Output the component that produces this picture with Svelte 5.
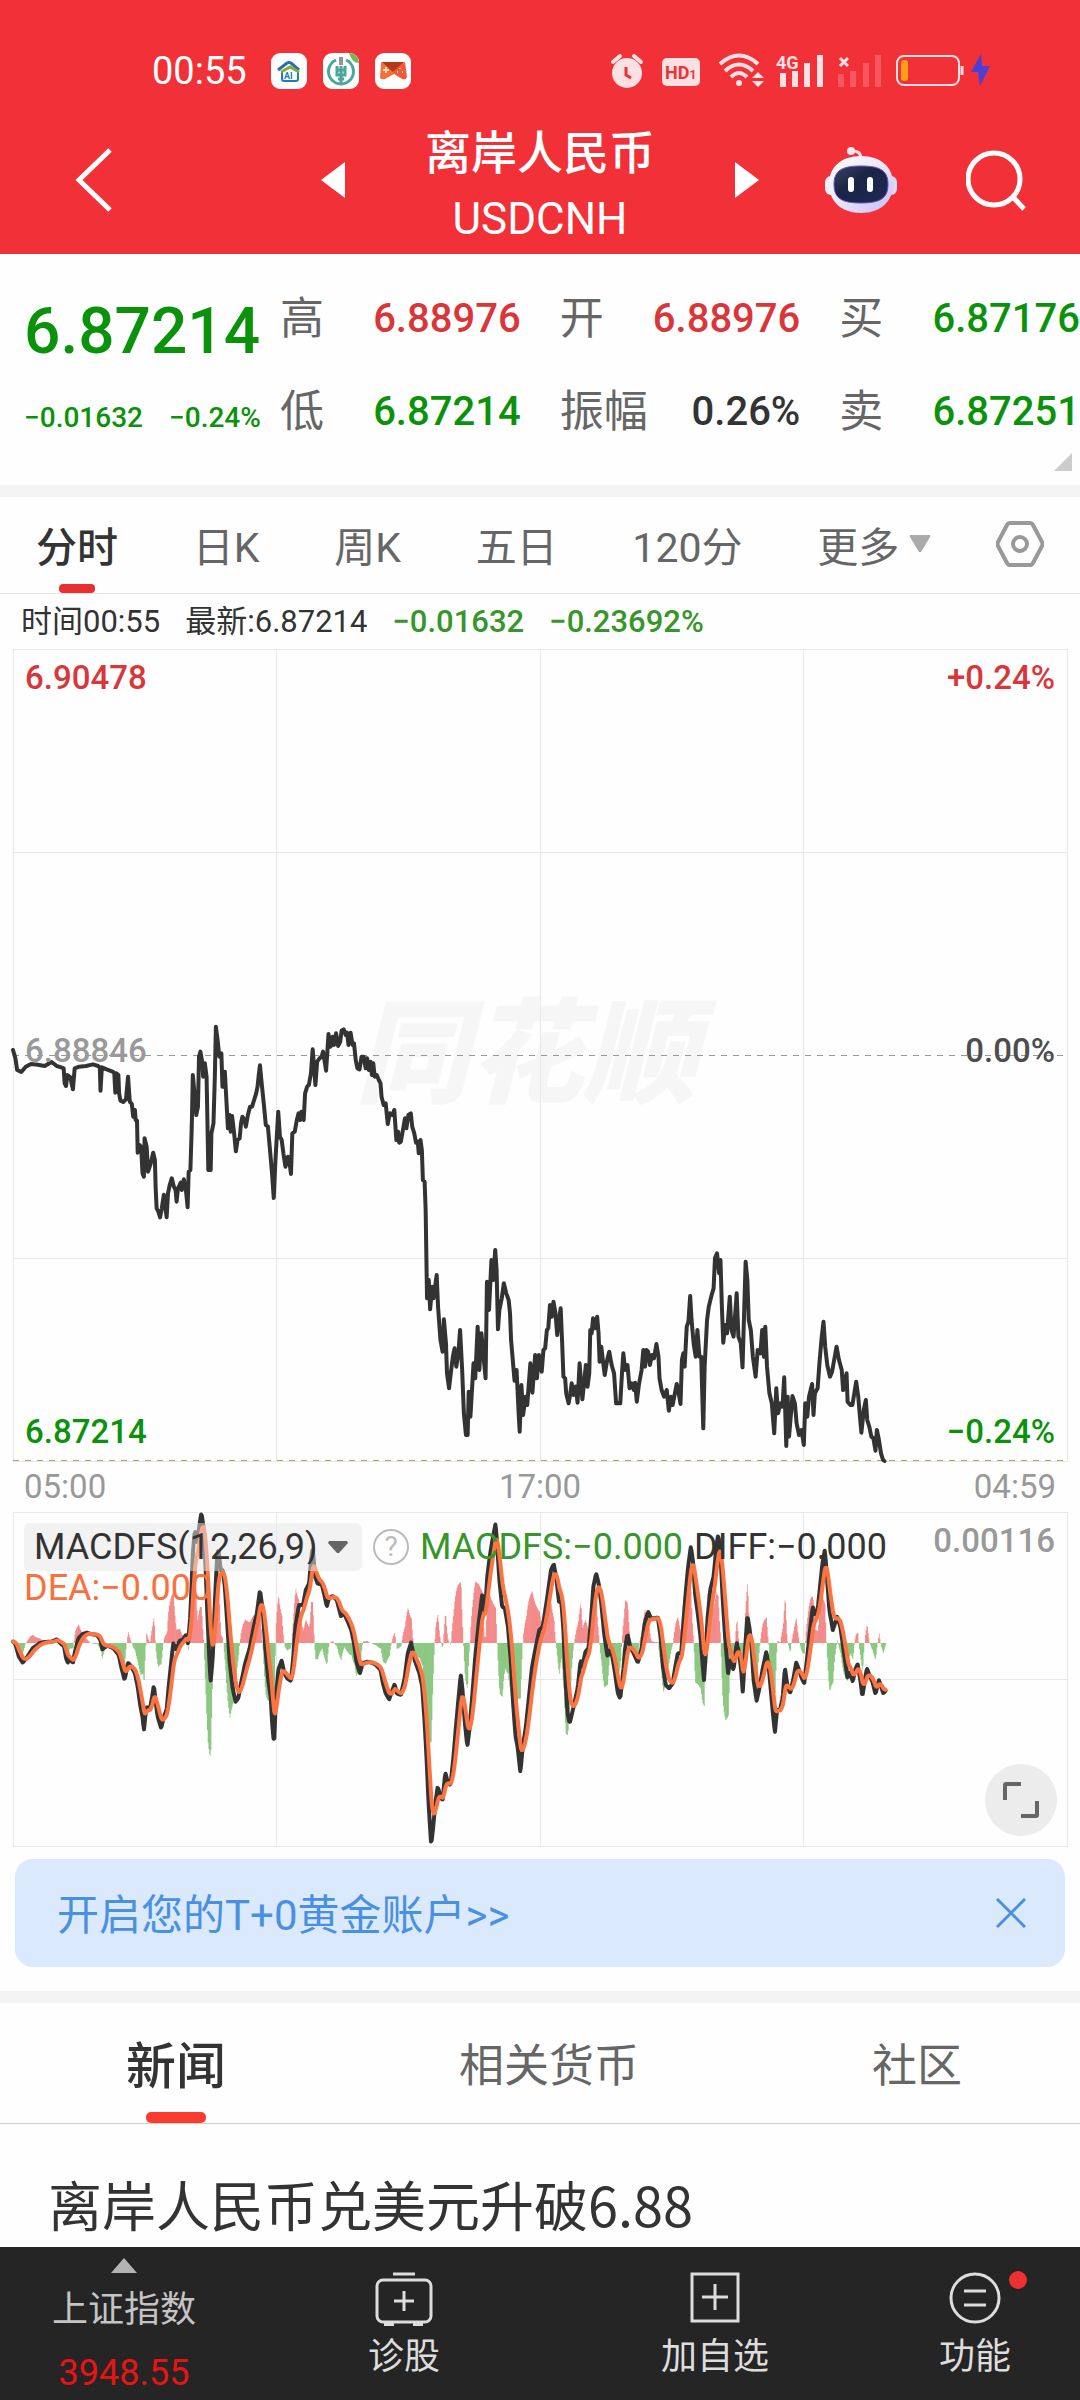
<script>
const quotes = [
    { label: '高', value: '6.88976', tone: 'up' },
    { label: '开', value: '6.88976', tone: 'up' },
    { label: '买', value: '6.87176', tone: 'down' },
    { label: '低', value: '6.87214', tone: 'down' },
    { label: '振幅', value: '0.26%', tone: 'flat' },
    { label: '卖', value: '6.87251', tone: 'down' },
]
const periods = ['分时', '日K', '周K', '五日', '120分']
const sections = ['新闻', '相关货币', '社区']

let period = '分时'
let section = '新闻'
let bannerOpen = true

// the session is drawn on a 3060 unit wide canvas, each list covers one half of it
const HALF = 1530
const WIDTH = 3060
const PRICE_H = 2436
const MACD_H = 1002
const ZERO = 393
const MINUTE = 2.125

const priceFirst = '38,270 45,295 50,330 62,336 75,320 90,312 110,314 130,318 150,306 165,318 178,322 185,325 188,370 192,378 196,345 205,352 208,370 212,388 217,325 230,320 250,318 270,313 285,318 290,322 292,392 296,322 310,328 325,334 332,338 335,398 338,340 344,345 346,400 350,422 358,426 366,418 372,350 377,425 383,432 387,470 392,450 394,480 398,482 400,578 405,555 410,560 414,640 418,650 420,535 426,560 430,635 438,610 445,578 450,600 452,680 455,745 460,755 465,772 470,745 476,704 480,740 484,772 488,700 493,675 499,655 505,680 510,690 513,725 517,685 525,668 528,690 534,658 540,690 545,742 548,635 553,630 557,500 560,345 565,400 570,465 575,440 578,290 582,275 588,310 590,350 595,310 600,350 602,460 605,630 612,630 614,520 620,490 624,350 627,200 632,240 637,290 643,280 646,380 653,335 658,430 662,505 667,465 670,515 674,468 680,520 685,574 690,540 696,535 700,490 704,470 710,480 714,500 720,465 726,440 732,440 738,420 744,400 748,380 752,340 755,316 760,370 766,430 772,495 778,500 785,580 790,640 795,714 800,600 808,455 813,530 818,540 823,580 829,620 836,590 840,600 845,642 849,520 856,515 862,480 867,460 872,480 875,455 882,480 886,400 892,380 897,375 903,340 908,268 912,320 916,375 921,305 928,295 934,290 938,275 942,300 947,332 951,270 954,222 960,260 966,230 970,255 976,220 982,258 988,245 992,212 998,208 1004,225 1008,218 1012,255 1018,218 1024,255 1028,250 1033,300 1038,325 1044,328 1050,290 1056,290 1062,325 1066,295 1071,330 1076,305 1080,345 1084,310 1088,350 1094,345 1100,360 1105,370 1108,410 1114,435 1120,430 1126,492 1132,460 1140,465 1145,450 1151,540 1156,515 1159,548 1164,545 1170,510 1176,475 1180,505 1186,465 1193,460 1197,500 1203,520 1208,548 1213,545 1216,580 1221,540 1225,570 1228,660 1233,665 1236,750 1240,1015 1245,960 1249,1048 1255,980 1259,1015 1268,945 1272,1040 1279,1140 1285,1175 1289,1078 1295,1150 1298,1240 1304,1285 1309,1240 1315,1190 1320,1165 1325,1220 1331,1180 1336,1110 1342,1230 1347,1360 1353,1425 1358,1425 1361,1295 1366,1370 1375,1210 1380,1255 1387,1100 1392,1230 1398,1120 1404,1190 1410,1255 1414,965 1420,1050 1427,900 1432,960 1438,870 1442,930 1446,1108 1450,1050 1457,1015 1463,970 1470,1000 1477,1020 1481,1060 1484,1140 1489,1200 1494,1262 1500,1230 1506,1360 1509,1415 1514,1275 1519,1365 1526,1310 1531,1335 1540,1210 1546,1298 1554,1185 1559,1255 1565,1185'
const priceSecond = '5,1235 10,1170 15,1165 20,1110 24,1105 29,1035 34,1070 39,1025 45,1060 50,1125 55,1080 60,1045 64,1140 68,1250 73,1255 76,1300 83,1330 88,1300 92,1270 97,1305 104,1280 109,1328 115,1210 123,1318 129,1260 133,1215 138,1280 143,1240 146,1110 150,1120 154,1075 160,1105 166,1070 170,1120 173,1205 178,1160 183,1205 188,1245 195,1200 201,1175 208,1215 215,1240 221,1330 233,1330 238,1240 242,1180 247,1230 254,1215 260,1285 266,1270 272,1290 276,1268 281,1325 287,1275 295,1230 300,1170 305,1220 309,1170 314,1175 319,1215 325,1185 331,1195 338,1152 344,1190 347,1255 353,1290 360,1310 368,1290 374,1352 380,1310 385,1335 397,1272 402,1295 408,1332 412,1200 416,1180 420,1220 426,1100 431,1085 436,1008 440,1080 446,1150 452,1190 457,1110 463,1190 468,1190 471,1300 474,1405 478,1220 485,1080 490,1040 497,1010 504,985 508,895 514,880 520,940 524,900 528,1040 532,1148 538,1095 543,1120 551,1010 556,1110 562,1130 571,1000 576,1130 583,1150 588,1222 592,1080 597,905 602,960 606,1080 612,1110 618,1190 626,1250 632,1170 640,1180 645,1110 650,1190 654,1100 659,1220 666,1300 673,1330 680,1420 686,1285 691,1360 698,1330 704,1340 709,1252 715,1458 719,1310 723,1430 733,1308 740,1330 745,1390 752,1425 759,1410 766,1455 770,1330 776,1370 781,1310 790,1272 794,1365 798,1300 806,1285 812,1200 818,1130 823,1085 828,1160 834,1215 842,1250 848,1235 854,1200 861,1160 868,1200 876,1230 880,1290 886,1260 890,1240 893,1325 901,1335 907,1335 918,1265 924,1310 928,1360 933,1418 940,1350 946,1320 950,1380 956,1400 962,1430 968,1435 974,1472 978,1410 984,1440 990,1480 996,1500 1000,1503'
const diffFirst = '38,485 45,492 55,530 66,548 80,530 95,505 115,490 130,486 150,485 165,478 178,492 186,497 192,535 197,548 202,538 212,548 218,515 228,475 240,462 252,458 268,463 282,465 292,480 297,508 312,497 330,505 345,525 352,560 362,600 372,548 382,560 392,580 400,620 408,680 414,710 418,752 425,680 435,690 442,650 447,615 452,665 458,710 468,745 476,710 484,690 490,620 496,560 503,490 512,508 522,482 532,478 540,465 546,490 552,420 556,330 560,220 566,150 573,190 580,130 585,98 591,140 597,260 603,420 609,560 612,605 618,530 624,370 630,240 634,205 641,270 647,270 653,320 660,430 667,545 675,620 684,665 692,655 700,610 712,550 725,505 737,440 746,400 755,330 763,390 771,510 779,600 786,650 791,740 796,792 801,660 808,570 818,542 826,580 834,595 845,603 851,540 858,440 868,375 880,375 888,330 898,310 903,240 908,205 915,290 922,310 935,315 942,345 949,380 955,355 966,348 978,360 990,408 1000,402 1010,425 1020,450 1028,490 1035,545 1045,580 1053,550 1066,545 1080,548 1092,555 1105,570 1112,610 1120,640 1130,658 1138,635 1146,612 1152,640 1164,645 1175,595 1184,520 1194,488 1204,540 1218,580 1226,620 1232,710 1238,820 1244,960 1252,1095 1258,1040 1264,970 1271,920 1278,945 1285,962 1293,878 1300,905 1308,915 1316,840 1324,740 1331,660 1338,582 1343,630 1350,730 1357,800 1364,740 1372,640 1380,530 1390,430 1400,345 1404,380 1408,400 1415,290 1422,230 1430,180 1439,130 1444,200 1450,300 1458,380 1466,385 1475,440 1483,540 1490,670 1497,770 1503,800 1511,877 1518,800 1527,740 1535,660 1545,560 1556,500 1566,450'
const diffSecond = '8,440 20,360 32,270 40,252 48,300 55,365 62,365 68,450 74,600 80,700 86,730 93,700 100,670 110,620 118,540 123,560 132,515 141,505 148,420 155,320 163,280 170,310 178,370 186,460 196,530 203,508 210,530 218,580 226,640 233,655 242,570 247,505 254,462 262,500 272,520 284,548 295,505 304,430 314,395 322,415 335,415 342,412 350,470 357,560 365,615 375,625 385,610 393,560 400,520 410,520 416,430 423,340 430,260 438,200 445,250 450,340 458,400 466,470 471,540 476,600 481,530 486,420 494,330 504,290 512,200 517,165 523,200 530,350 538,480 546,580 552,540 562,570 571,487 578,520 584,570 589,640 594,530 602,405 609,450 615,510 620,600 629,662 638,620 646,570 657,515 663,550 671,640 677,710 682,757 688,690 697,690 705,650 711,562 717,610 726,640 735,600 744,547 752,570 760,595 767,610 775,540 785,440 792,380 798,405 806,390 813,320 820,250 827,210 833,290 840,390 850,450 863,410 872,440 880,500 888,560 893,595 900,575 908,605 915,570 922,552 930,600 936,650 943,600 949,565 956,585 965,605 974,642 984,600 990,620 997,640 1003,632'

function parse(text, dx, dy) {
    return text.split(' ').map((pair) => {
        const [x, y] = pair.split(',').map(Number)
        return [x + dx, y + dy]
    })
}

// one value per minute
function resample(points) {
    const out = []
    let i = 0
    const end = points[points.length - 1][0]
    for (let x = 0; x <= end; x += MINUTE) {
        while (points[i + 1][0] < x) i++
        const [x0, y0] = points[i]
        const [x1, y1] = points[i + 1]
        out.push([x, y0 + ((y1 - y0) * (x - x0)) / (x1 - x0)])
    }
    return out
}

function ema(points, n) {
    const k = 2 / (n + 1)
    let last = points[0][1]
    return points.map(([x, y]) => {
        last = last + (y - last) * k
        return [x, last]
    })
}

const toLine = (points) => points.map(([x, y]) => x.toFixed(1) + ',' + y.toFixed(1)).join(' ')

const price = [...parse(priceFirst, -38, 933), ...parse(priceSecond, HALF, 933)]
const diff = resample([...parse(diffFirst, -38, -96), ...parse(diffSecond, HALF, -96)])
const dea = ema(diff, 9)
const bars = diff.map(([x, y], i) => [x, 2 * (y - dea[i][1])])

function toBars(list) {
    return list.map(([x, h]) => `M${x.toFixed(1)} ${ZERO}h${MINUTE}v${h.toFixed(1)}h-${MINUTE}z`).join('')
}
const redBars = toBars(bars.filter((b) => b[1] < 0))
const greenBars = toBars(bars.filter((b) => b[1] > 0))
</script>

<div class="page">
    <header>
        <div class="status">
            <span class="clock">00:55</span>
            <div class="apps">
                <svg width="36" height="36" viewBox="0 0 36 36">
                    <rect width="36" height="36" rx="9" fill="#fff" />
                    <path d="M11 19v7q0 2 2 2h12q2 0 2-2v-7" fill="none" stroke="#1b7fb8" stroke-width="2" />
                    <path d="M7 17l9-7q2-1 4 0l8 7" fill="none" stroke="#2a6db5" stroke-width="3" />
                    <path d="M10 19l9-5 9 5" fill="none" stroke="#7fb23a" stroke-width="3" />
                    <text x="13" y="26" font-size="9" font-weight="700" fill="#1b7fb8">AI</text>
                </svg>
                <svg width="36" height="36" viewBox="0 0 36 36">
                    <rect width="36" height="36" rx="9" fill="#fff" />
                    <path d="M13 7a12.500 12.500 0 1 0 10 0" fill="none" stroke="#4aa79c" stroke-width="3" />
                    <path d="M18 13v17M14 13v9h8v-9M14 17h8M15 26h6" fill="none" stroke="#4aa79c" stroke-width="3" />
                    <path d="M16 4h4v8h-4z" fill="#8a9a98" />
                    <path d="M26 0q9 0 10 10-7 0-10-10z" fill="#6cba55" />
                </svg>
                <svg width="36" height="36" viewBox="0 0 36 36">
                    <rect width="36" height="36" rx="9" fill="#fff" />
                    <path d="M7 9h22l-4 9 6 7q-1 2-4 1l-8-5-9 5q-3 1-5-1l1-14q0-2 1-2z" fill="#f4703b" />
                    <path d="M7 9h22L18 19z" fill="#b7361c" />
                    <path d="M18 19l12-10 2 15q-1 3-4 2z" fill="#ef5a38" />
                    <path d="M11 14v6M8 17h6" stroke="#ffd9b8" stroke-width="2" />
                    <path d="M25 15v1M22 19h1M27 19h1" stroke="#ffc7b8" stroke-width="2" />
                </svg>
            </div>
            <div class="signals">
                <svg width="34" height="40" viewBox="610 51 34 40">
                    <circle cx="627" cy="73" r="15" fill="#fde0e1" />
                    <path d="M613 62l7-6M641 62l-7-6" stroke="#fde0e1" stroke-width="4" stroke-linecap="round" />
                    <path d="M626 67v8l5 3" fill="none" stroke="#f03037" stroke-width="3" />
                </svg>
                <svg width="38" height="40" viewBox="662 51 38 40" class="hd">
                    <rect x="662" y="58" width="38" height="28" rx="5" fill="#fde0e1" />
                    <text x="665" y="79" font-size="18" font-weight="700" fill="#f03037">HD<tspan font-size="12">1</tspan></text>
                </svg>
                <svg width="46" height="40" viewBox="718 51 46 40" class="wifi">
                    <g fill="none" stroke="#fde0e1" stroke-width="4">
                        <path d="M720 64q19-17 38 0" />
                        <path d="M725 71q14-13 28 0" />
                        <path d="M731 77q8-8 16 0" />
                    </g>
                    <circle cx="739" cy="83" r="3" fill="#fde0e1" />
                    <path d="M752 78l6-6 6 6zM752 81l6 6 6-6z" fill="#fde0e1" />
                </svg>
                <svg width="48" height="40" viewBox="776 51 48 40">
                    <text x="776" y="69" font-size="18" font-weight="700" fill="#fde0e1">4G</text>
                    <path d="M783 76v8M795 74v10M807 66v18M820 58v26" stroke="#fde0e1" stroke-width="6" stroke-linecap="square" />
                </svg>
                <svg width="46" height="40" viewBox="836 51 46 40">
                    <path d="M840 58l8 8M848 58l-8 8" stroke="#fde0e1" stroke-width="3" />
                    <path d="M841 77v7M853 74v10M866 66v18M878 58v26" stroke="#f7585f" stroke-width="6" stroke-linecap="square" />
                </svg>
                <svg width="70" height="40" viewBox="894 51 70 40">
                    <rect x="897" y="56" width="62" height="29" rx="7" fill="none" stroke="#fde0e1" stroke-width="2" />
                    <rect x="901" y="60" width="7" height="21" rx="3" fill="#fb9f14" />
                    <path d="M962 66v9" stroke="#fde0e1" stroke-width="3" />
                </svg>
                <svg width="22" height="40" viewBox="970 51 22 40" class="bolt">
                    <path d="M981 54l-10 18h7l2 14 10-20h-8z" fill="#4a40d8" />
                </svg>
            </div>
        </div>
        <div class="titlebar">
            <button class="back" aria-label="返回">
                <svg width="40" height="66" viewBox="0 0 40 66"><path d="M36 3L5 33l31 30" fill="none" stroke="#fff" stroke-width="5" /></svg>
            </button>
            <div class="stock">
                <button aria-label="上一个"><svg width="24" height="36" viewBox="0 0 24 36"><path d="M24 0v36L0 18z" fill="#fff" /></svg></button>
                <h1>离岸人民币<span>USDCNH</span></h1>
                <button aria-label="下一个"><svg width="24" height="36" viewBox="0 0 24 36"><path d="M0 0v36l24-18z" fill="#fff" /></svg></button>
            </div>
            <div class="tools">
                <button aria-label="助手">
                    <svg width="72" height="68" viewBox="0 0 72 68">
                        <defs>
                            <linearGradient id="shell" x1="0" y1="0" x2="1" y2="1">
                                <stop offset="0" stop-color="#ffffff" />
                                <stop offset="0.500" stop-color="#e9e6f8" />
                                <stop offset="1" stop-color="#c3bdf2" />
                            </linearGradient>
                            <linearGradient id="visor" x1="0" y1="0" x2="1" y2="1">
                                <stop offset="0" stop-color="#3b4560" />
                                <stop offset="0.400" stop-color="#1a2446" />
                                <stop offset="1" stop-color="#1d2a55" />
                            </linearGradient>
                        </defs>
                        <path d="M26 5q10-1 10 8" fill="none" stroke="#f1dbe8" stroke-width="3" />
                        <circle cx="26" cy="5" r="4" fill="#f9e9f0" />
                        <rect x="0" y="30" width="12" height="19" rx="6" fill="#efeefb" />
                        <rect x="60" y="30" width="12" height="19" rx="6" fill="#dcd9f6" />
                        <path d="M36 10c20 0 32 11 32 28S56 67 36 67 4 55 4 38s12-28 32-28z" fill="url(#shell)" />
                        <path d="M36 20c18 0 27 4 27 18s-7 19-27 19S9 52 9 38s9-18 27-18z" fill="url(#visor)" stroke="#6a50c8" stroke-width="1" />
                        <rect x="23" y="31" width="6" height="15" rx="3" fill="#fff" />
                        <rect x="42" y="31" width="6" height="15" rx="3" fill="#fff" />
                    </svg>
                </button>
                <button aria-label="搜索">
                    <svg width="60" height="62" viewBox="0 0 60 62">
                        <circle cx="28" cy="30" r="26" fill="none" stroke="#fff" stroke-width="5" />
                        <path d="M47 48l11 12" stroke="#fff" stroke-width="5" />
                    </svg>
                </button>
            </div>
        </div>
    </header>

    <section class="quote">
        <div class="latest">
            <div class="last">6.87214</div>
            <div class="change"><span>−0.01632</span><span>−0.24%</span></div>
        </div>
        <div class="figures">
            {#each quotes as q}
            <div class="figure"><span class="name">{q.label}</span><span class={q.tone}>{q.value}</span></div>
            {/each}
        </div>
        <svg class="corner" width="18" height="18" viewBox="0 0 18 18"><path d="M18 0v18H0z" fill="#ccc" /></svg>
    </section>

    <nav class="periods">
        {#each periods as p}
        <button class:active={p === period} on:click={() => (period = p)}>{p}</button>
        {/each}
        <button class="more">更多<svg width="22" height="18" viewBox="0 0 22 18"><path d="M1 0h20q1 1 0 2L12 17h-2L1 2q-1-1 0-2z" fill="#aaa" /></svg></button>
        <button aria-label="设置">
            <svg width="48" height="46" viewBox="0 0 48 46">
                <path d="M14 2h20q2 0 3 2l9 17q1 2 0 4l-9 17q-1 2-3 2H14q-2 0-3-2L2 25q-1-2 0-4l9-17q1-2 3-2z" fill="none" stroke="#999" stroke-width="4" />
                <circle cx="24" cy="23" r="7" fill="none" stroke="#999" stroke-width="4" />
            </svg>
        </button>
    </nav>

    <div class="info">
        <span>时间00:55</span><span>最新:6.87214</span><span class="fall">−0.01632</span><span class="fall">−0.23692%</span>
    </div>

    <div class="chart price">
        <div class="watermark">同花顺</div>
        <svg viewBox="0 0 {WIDTH} {PRICE_H}" preserveAspectRatio="none">
            <g class="grid">
                <path d="M765 0V2436M1530 0V2436M2295 0V2436M0 609H3060M0 1827H3060" />
                <path class="frame" d="M0 0H3060V2436H0z" />
            </g>
            <path class="dash" d="M0 1218H3060" />
            <path class="dash low" d="M0 2434H3060" />
            <polyline class="line" points={toLine(price)} />
        </svg>
        <span class="tl up">6.90478</span>
        <span class="tr up">+0.24%</span>
        <span class="ml">6.88846</span>
        <span class="mr">0.00%</span>
        <span class="bl down">6.87214</span>
        <span class="br down">−0.24%</span>
    </div>
    <div class="hours"><span>05:00</span><span>17:00</span><span>04:59</span></div>

    <div class="chart macd">
        <svg viewBox="0 0 {WIDTH} {MACD_H}" preserveAspectRatio="none">
            <g class="grid">
                <path d="M765 0V1002M1530 0V1002M2295 0V1002M0 501H3060" />
                <path class="frame" d="M0 0H3060V1002H0z" />
            </g>
            <path d={redBars} fill="#f38b8b" />
            <path d={greenBars} fill="#8cc881" />
            <polyline class="line" points={toLine(diff)} />
            <polyline class="line dea" points={toLine(dea)} />
        </svg>
        <div class="legend">
            <div class="row">
                <label class="picker">
                    <select aria-label="指标"><option>MACDFS(12,26,9)</option></select>
                    <svg width="20" height="13" viewBox="0 0 20 13"><path d="M1 0h18l1 2-9 10h-2L0 2z" fill="#666" /></svg>
                </label>
                <button class="help" aria-label="说明">?</button>
                <span class="fall">MACDFS:−0.000</span>
                <span>DIFF:−0.000</span>
            </div>
            <div class="orange">DEA:−0.000</div>
        </div>
        <span class="tr peak">0.00116</span>
        <button class="expand" aria-label="全屏">
            <svg width="38" height="38" viewBox="0 0 38 38"><path d="M3 19V4q0-1 1-1h15M35 20v14q0 1-1 1H19" fill="none" stroke="#666" stroke-width="4" /></svg>
        </button>
    </div>

    {#if bannerOpen}
    <div class="banner">
        <a href="#gold">开启您的T+0黄金账户&gt;&gt;</a>
        <button aria-label="关闭" on:click={() => (bannerOpen = false)}>
            <svg width="30" height="30" viewBox="0 0 30 30"><path d="M1 1l28 28M29 1L1 29" stroke="#4a90e2" stroke-width="3" /></svg>
        </button>
    </div>
    {/if}

    <nav class="sections">
        {#each sections as s}
        <button class:active={s === section} on:click={() => (section = s)}>{s}</button>
        {/each}
    </nav>
    <a class="headline" href="#news">离岸人民币兑美元升破6.88</a>

    <footer>
        <button class="index">
            <svg width="26" height="15" viewBox="0 0 26 15"><path d="M13 0l13 15H0z" fill="#b4b4b4" /></svg>
            <span>上证指数</span>
            <span class="points">3948.55</span>
        </button>
        <button>
            <svg width="58" height="54" viewBox="0 0 58 54">
                <path d="M18 2h22" stroke="#ddd" stroke-width="3" />
                <rect x="2" y="8" width="54" height="42" rx="6" fill="none" stroke="#ddd" stroke-width="3" />
                <path d="M19 29h20M29 19v20" stroke="#ddd" stroke-width="3" />
                <path d="M9 52h10M38 52h10" stroke="#ddd" stroke-width="4" />
            </svg>
            <span>诊股</span>
        </button>
        <button>
            <svg width="50" height="54" viewBox="0 0 50 54">
                <rect x="2" y="2" width="46" height="47" fill="none" stroke="#ddd" stroke-width="3" />
                <path d="M12 25h26M25 12v26" stroke="#ddd" stroke-width="3" />
            </svg>
            <span>加自选</span>
        </button>
        <button>
            <svg width="52" height="54" viewBox="0 0 52 54">
                <circle cx="26" cy="26" r="24" fill="none" stroke="#ddd" stroke-width="3" />
                <path d="M15 19h22M15 33h22" stroke="#ddd" stroke-width="3" />
            </svg>
            <span>功能</span>
            <i class="badge"></i>
        </button>
    </footer>
</div>

<style>
:global(body){
    background-color: #fff;
}

.page{
    font-family: Roboto, "Noto Sans CJK SC", sans-serif;
    color: #333;
    background-color: #fefefe;
}

button{
    border: none;
    padding: 0;
    background: none;
    font: inherit;
    color: inherit;
}

svg{
    display: block;
}

a{
    text-decoration: none;
}

.up{
    color: #d9363a;
}
.down{
    color: #0a930a;
}
.flat{
    color: #333;
}
.fall{
    color: #37962a;
}

header{
    background-color: #f23037;
    color: #fff;
}

.status{
    display: flex;
    align-items: center;
    padding: 36px 88px 0 152px;
    height: 70px;
}
.clock{
    font-size: 38px;
}
.apps{
    display: flex;
    gap: 16px;
    margin-left: 24px;
}
.signals{
    display: flex;
    gap: 12px;
    margin-left: auto;
}
.hd, .wifi{
    margin-left: 6px;
}
.bolt{
    margin-left: -6px;
}

.titlebar{
    display: grid;
    grid-template-columns: 1fr 438px 1fr;
    align-items: center;
    height: 148px;
}
.back{
    justify-self: start;
    margin-left: 74px;
}
.stock{
    display: flex;
    align-items: center;
    justify-content: space-between;
}
h1{
    margin: 0;
    padding-top: 12px;
    font-size: 46px;
    font-weight: 500;
    line-height: 66px;
    text-align: center;
}
h1 span{
    display: block;
    font-size: 44px;
    font-weight: 400;
}
.tools{
    display: flex;
    align-items: center;
    justify-content: flex-end;
    gap: 69px;
    padding-right: 54px;
}

.quote{
    position: relative;
    display: flex;
    padding: 35px 0 43px 24px;
    border-bottom: 12px solid #f4f4f4;
}
.latest{
    width: 256px;
    color: #0a930a;
    font-weight: 500;
    white-space: nowrap;
}
.last{
    padding-top: 8px;
    font-size: 64px;
    line-height: 70px;
}
.change{
    display: flex;
    gap: 26px;
    padding-top: 34px;
    font-size: 28px;
    line-height: 34px;
}
.figures{
    flex: 1;
    display: grid;
    grid-template-columns: repeat(3, 1fr);
    gap: 33px 39px;
}
.figure{
    display: flex;
    justify-content: space-between;
    font-size: 40px;
    font-weight: 500;
    line-height: 60px;
    white-space: nowrap;
}
.figure .name{
    font-size: 44px;
    font-weight: 400;
    color: #666;
}
.corner{
    position: absolute;
    right: 8px;
    bottom: 14px;
}

.periods{
    display: flex;
    justify-content: space-between;
    padding: 0 36px;
    height: 96px;
    font-size: 41px;
    color: #666;
    border-bottom: 1px solid #e2e2e2;
}
.periods button{
    position: relative;
    padding-bottom: 2px;
}
.periods .active, .sections .active{
    color: #333;
    font-weight: 500;
}
.active::after{
    content: "";
    position: absolute;
    left: 50%;
    bottom: 0;
    width: 36px;
    height: 9px;
    margin-left: -18px;
    border-radius: 4px;
    background-color: #e83030;
}
.more{
    display: flex;
    align-items: center;
    gap: 10px;
    margin-right: -10px;
}

.info{
    display: flex;
    gap: 25px;
    padding-left: 21px;
    font-size: 31px;
    line-height: 55px;
}
.info .fall{
    font-weight: 500;
}

.chart{
    display: grid;
    margin: 0 13px;
    font-size: 33px;
    line-height: 34px;
}
.chart > *{
    grid-area: 1 / 1;
}
.chart > svg{
    width: 100%;
    overflow: visible;
}
.chart > span{
    font-weight: 500;
}
.price > svg{
    height: 812px;
}
.macd > svg{
    height: 334px;
}
.chart path, .chart polyline{
    vector-effect: non-scaling-stroke;
}
.grid{
    fill: none;
    stroke: #e8e8e8;
    stroke-width: 1px;
    shape-rendering: crispEdges;
}
.frame{
    stroke-width: 1px;
}
.dash{
    stroke: #999;
    stroke-width: 1px;
    stroke-dasharray: 6 6;
    shape-rendering: crispEdges;
}
.low{
    stroke: #b9a176;
}
.line{
    fill: none;
    stroke: #333;
    stroke-width: 4px;
    stroke-linejoin: round;
    stroke-linecap: round;
}
.dea{
    stroke: #fb7441;
}
.watermark{
    place-self: center;
    padding-right: 28px;
    font-size: 114px;
    font-style: italic;
    font-weight: 900;
    line-height: 120px;
    color: #f6f6f6;
}
.tl, .ml, .bl{
    justify-self: start;
    padding: 12px;
}
.tr, .mr, .br{
    justify-self: end;
    padding: 12px;
}
.tl, .tr{
    align-self: start;
}
.ml, .mr{
    align-self: center;
    padding-bottom: 20px;
}
.ml{
    color: #999;
}
.mr{
    color: #4d4d4d;
}
.bl, .br{
    align-self: end;
}

.hours{
    display: flex;
    justify-content: space-between;
    padding: 0 24px;
    font-size: 33px;
    line-height: 51px;
    color: #999;
}

.legend{
    padding: 11px;
    font-size: 36px;
    line-height: 34px;
    white-space: nowrap;
    align-self: start;
}
.row{
    display: flex;
    align-items: center;
    gap: 11px;
}
.picker{
    display: flex;
    align-items: center;
    gap: 10px;
    height: 48px;
    padding: 0 14px 0 10px;
    border-radius: 6px;
    background-color: rgba(230, 230, 230, 0.5);
}
select{
    appearance: none;
    border: none;
    padding: 0;
    background: none;
    font: inherit;
    color: inherit;
}
.help{
    width: 36px;
    height: 36px;
    border: 2px solid #bbb;
    border-radius: 50%;
    font-size: 28px;
    line-height: 32px;
    color: #bbb;
}
.orange{
    color: #f9703c;
}
.peak{
    color: #999;
}
.expand{
    place-self: end;
    display: grid;
    place-items: center;
    width: 72px;
    height: 72px;
    margin: 10px;
    border-radius: 50%;
    background-color: #ececec;
}

.banner{
    display: flex;
    align-items: center;
    justify-content: space-between;
    height: 108px;
    margin: 13px 15px 24px;
    padding: 0 39px 0 42px;
    border-radius: 18px;
    background-color: #dae9fb;
}
.banner a{
    padding-bottom: 4px;
    font-size: 42px;
    color: #4a90e2;
}

.sections{
    display: flex;
    justify-content: space-between;
    height: 120px;
    padding: 0 118px 0 126px;
    border-top: 12px solid #f4f4f4;
    border-bottom: 1px solid #ccc;
    font-size: 45px;
    color: #666;
}
.sections button{
    position: relative;
    padding-bottom: 2px;
}
.sections .active{
    font-size: 50px;
}
.sections .active::after{
    width: 60px;
    height: 11px;
    margin-left: -30px;
    border-radius: 5px;
    background-color: #f93b30;
}
.headline{
    display: block;
    padding: 40px 48px 3px;
    font-family: "Noto Sans CJK SC", sans-serif;
    font-size: 54px;
    line-height: 80px;
    color: #333;
}

footer{
    display: grid;
    grid-template-columns: 248fr 312fr 310fr 210fr;
    height: 153px;
    background-color: #252525;
    color: #ddd;
    font-size: 36px;
}
footer button{
    position: relative;
    display: flex;
    flex-direction: column;
    align-items: center;
    padding-top: 25px;
    line-height: 62px;
}
.index{
    padding-top: 11px;
    color: #c4c4c4;
}
.index span{
    line-height: 74px;
}
.index .points{
    line-height: 52px;
    color: #e81414;
}
.badge{
    position: absolute;
    top: 24px;
    right: 53px;
    width: 18px;
    height: 18px;
    border-radius: 50%;
    background-color: #ee3030;
}
</style>
